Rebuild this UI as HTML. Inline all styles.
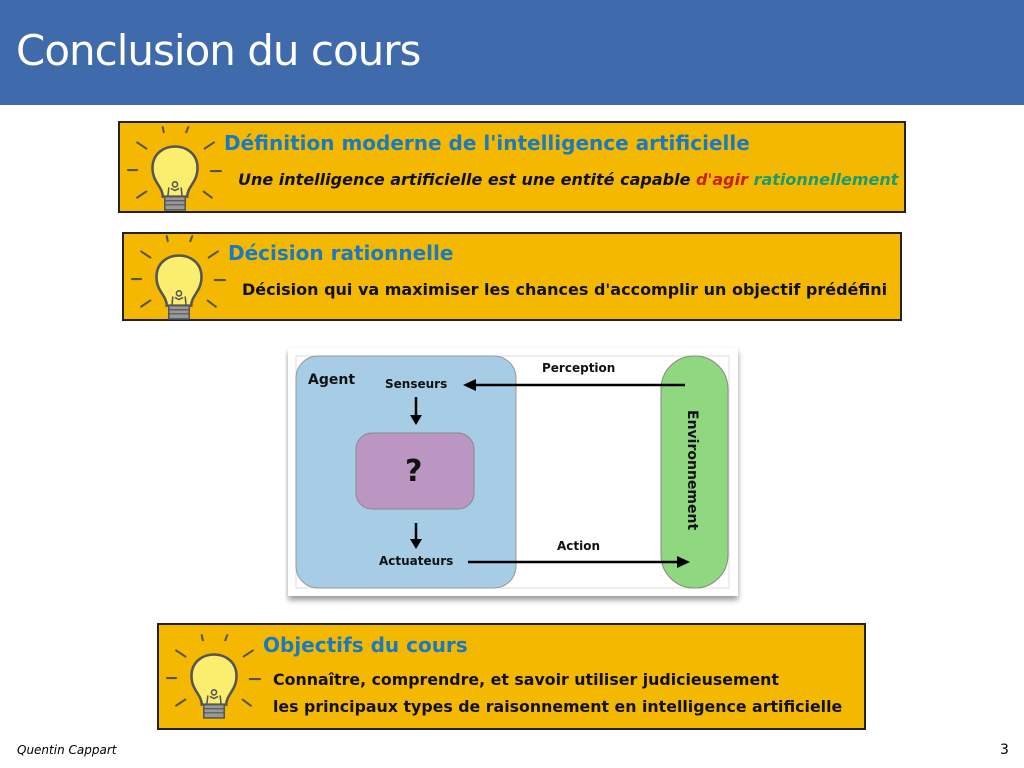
<!DOCTYPE html>
<html><head><meta charset="utf-8"><style>
body{margin:0;width:1024px;height:768px;background:#fff;position:relative;overflow:hidden;font-family:"Liberation Sans","DejaVu Sans",sans-serif}
.bar{position:absolute;left:0;top:0;width:1024px;height:105px;background:#3f6aab}
.bar h1{position:absolute;left:16px;top:26px;margin:0;font-weight:normal;color:#fff;font-size:42px;font-family:"DejaVu Sans","Liberation Sans",sans-serif;letter-spacing:-1px}
.box{position:absolute;background:#f5b800;border:2px solid #222;box-sizing:border-box}
.box svg{position:absolute}
.t{position:absolute;color:#1a7ac0;font-weight:bold;font-size:20px;font-family:"DejaVu Sans",sans-serif;white-space:nowrap}
.d{position:absolute;color:#111;font-weight:bold;font-size:16px;font-family:"DejaVu Sans",sans-serif;white-space:nowrap}
.foot{position:absolute;font-size:12px;font-style:italic;font-family:"DejaVu Sans",sans-serif}
</style></head><body>
<svg width="0" height="0" style="position:absolute"><defs>
<g id="bulb">
<g stroke="#555" stroke-width="2" stroke-linecap="round">
<line x1="40" y1="4" x2="41" y2="9"/><line x1="65" y1="4" x2="63" y2="9"/>
<line x1="15" y1="19" x2="24" y2="25"/><line x1="90" y1="19" x2="81" y2="25"/>
<line x1="6" y1="46" x2="15" y2="46"/><line x1="87" y1="47" x2="97" y2="47"/>
<line x1="15" y1="73" x2="24" y2="67"/><line x1="88" y1="73" x2="80" y2="67"/>
</g>
<path d="M40 72 C40 62 30 58 30 44 C30 30 41 23 52 23 C63 23 74 30 74 44 C74 58 64 62 64 72 Z" fill="#fbee6e" stroke="#555" stroke-width="2.5"/>
<path d="M45 72 L46 63 M59 72 L58 63 M48 64 L52 66 L56 64" stroke="#555" stroke-width="1.5" fill="none"/>
<circle cx="52" cy="60" r="2.5" fill="none" stroke="#555" stroke-width="1.5"/>
<rect x="42" y="72" width="20" height="13" fill="#999" stroke="#555" stroke-width="1.5"/>
<path d="M42 76 H62 M42 80 H62" stroke="#555" stroke-width="1.2"/>
</g></defs></svg>
<div class="bar"><h1>Conclusion du cours</h1></div>

<div class="box" style="left:118px;top:121px;width:788px;height:92px">
<svg style="left:0;top:0" width="110" height="90" viewBox="0 0 104 88"><use href="#bulb"/></svg>
<div class="t" style="left:104px;top:8px">Définition moderne de l'intelligence artificielle</div>
<div class="d" style="left:118px;top:47px;font-style:italic">Une intelligence artificielle est une entité capable <span style="color:#c8221c">d'agir</span> <span style="color:#1e9a6e">rationnellement</span></div>
</div>

<div class="box" style="left:122px;top:232px;width:780px;height:89px">
<svg style="left:0;top:-2px" width="110" height="90" viewBox="0 0 104 88"><use href="#bulb"/></svg>
<div class="t" style="left:104px;top:7px">Décision rationnelle</div>
<div class="d" style="left:118px;top:46px">Décision qui va maximiser les chances d'accomplir un objectif prédéfini</div>
</div>

<svg style="position:absolute;left:285px;top:345px" width="460" height="265">
<defs><filter id="sh"><feDropShadow dx="0" dy="4" stdDeviation="3" flood-opacity="0.4"/></filter></defs>
<rect x="3" y="3" width="450" height="248" fill="#fff" filter="url(#sh)"/>
<rect x="11" y="11" width="433" height="232" fill="none" stroke="#ddd"/>
<rect x="11" y="11" width="220" height="232" rx="22" fill="#a7cce5" stroke="#999"/>
<rect x="376" y="11" width="67" height="232" rx="33" fill="#90d880" stroke="#888"/>
<rect x="71" y="88" width="118" height="76" rx="16" fill="#bc96c2" stroke="#888"/>
<g font-family="DejaVu Sans,sans-serif" font-weight="bold" fill="#111">
<text x="23" y="39" font-size="14">Agent</text>
<text x="100" y="43" font-size="12">Senseurs</text>
<text x="94" y="220" font-size="12">Actuateurs</text>
<text x="257" y="27" font-size="12">Perception</text>
<text x="272" y="205" font-size="12">Action</text>
<text x="120" y="136" font-size="30">?</text>
<text transform="translate(403,65) rotate(90)" font-size="14">Environnement</text>
</g>
<g stroke="#000" stroke-width="2.5">
<line x1="131" y1="52" x2="131" y2="72"/><line x1="131" y1="178" x2="131" y2="196"/>
<line x1="190" y1="40" x2="400" y2="40"/><line x1="183" y1="217" x2="395" y2="217"/>
</g>
<g fill="#000">
<path d="M125 70 L137 70 L131 80Z"/><path d="M125 194 L137 194 L131 204Z"/>
<path d="M178 40 L191 34 L191 46Z"/><path d="M405 217 L392 211 L392 223Z"/>
</g>
</svg>

<div class="box" style="left:157px;top:623px;width:709px;height:107px">
<svg style="left:0;top:6px" width="110" height="90" viewBox="0 0 104 88"><use href="#bulb"/></svg>
<div class="t" style="left:104px;top:8px">Objectifs du cours</div>
<div class="d" style="left:114px;top:45px;font-size:15.8px">Connaître, comprendre, et savoir utiliser judicieusement</div>
<div class="d" style="left:114px;top:72px;font-size:15.8px">les principaux types de raisonnement en intelligence artificielle</div>
</div>

<div class="foot" style="left:17px;top:743px">Quentin Cappart</div>
<div class="foot" style="left:1000px;top:742px;font-style:normal;font-size:14px">3</div>
</body></html>
